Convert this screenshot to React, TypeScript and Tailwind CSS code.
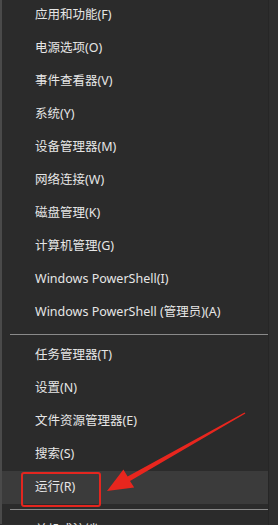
import React from 'react';

type Item = { label: string; active?: boolean };

const GROUP_A: Item[] = [
  { label: '应用和功能(F)' },
  { label: '电源选项(O)' },
  { label: '事件查看器(V)' },
  { label: '系统(Y)' },
  { label: '设备管理器(M)' },
  { label: '网络连接(W)' },
  { label: '磁盘管理(K)' },
  { label: '计算机管理(G)' },
  { label: 'Windows PowerShell(I)' },
  { label: 'Windows PowerShell (管理员)(A)' },
];

const GROUP_B: Item[] = [
  { label: '任务管理器(T)' },
  { label: '设置(N)' },
  { label: '文件资源管理器(E)' },
  { label: '搜索(S)' },
  { label: '运行(R)', active: true },
];

const GROUP_C: Item[] = [{ label: '关机或注销(U)' }];

function MenuRow({ item }: { item: Item }) {
  return (
    <div
      className={`h-[33px] shrink-0 flex items-center pl-[33px] text-[12.5px] text-[#e6e6e6] ${
        item.active ? 'bg-[#3b3b3b]' : ''
      }`}
    >
      {item.label}
    </div>
  );
}

function Separator() {
  return (
    <div className="h-[10px] shrink-0 flex items-center pl-[8px]">
      <div className="h-px w-full bg-[#8a8a8a]" />
    </div>
  );
}

export default function App() {
  return (
    <div
      className="relative w-[278px] h-[525px] overflow-hidden bg-[#2e2e2e] flex"
      style={{ fontFamily: '"Noto Sans", "Noto Sans CJK SC", sans-serif' }}
    >
      {/* Menu */}
      <div className="w-[268px] h-full flex flex-col bg-[#2b2b2b] border-l-2 border-[#4a4a4a] -mt-px">
        {GROUP_A.map((it) => (
          <MenuRow key={it.label} item={it} />
        ))}
        <Separator />
        {GROUP_B.map((it) => (
          <MenuRow key={it.label} item={it} />
        ))}
        <Separator />
        {GROUP_C.map((it) => (
          <MenuRow key={it.label} item={it} />
        ))}
      </div>
      <div className="w-px h-full bg-[#262626]" />

      {/* Annotation: red box */}
      <div className="absolute left-[21px] top-[472px] w-[80px] h-[35px] border-2 border-[#e3261f] rounded-[3px] pointer-events-none" />

      {/* Annotation: arrow */}
      <svg className="absolute inset-0 pointer-events-none" width="278" height="525" viewBox="0 0 278 525">
        <polygon
          points="244.6,412.4 127.6,476.5 123.4,469.5 107,491 134.2,487.6 130.0,480.9 245.4,413.6"
          fill="#e8261e"
        />
      </svg>
    </div>
  );
}
